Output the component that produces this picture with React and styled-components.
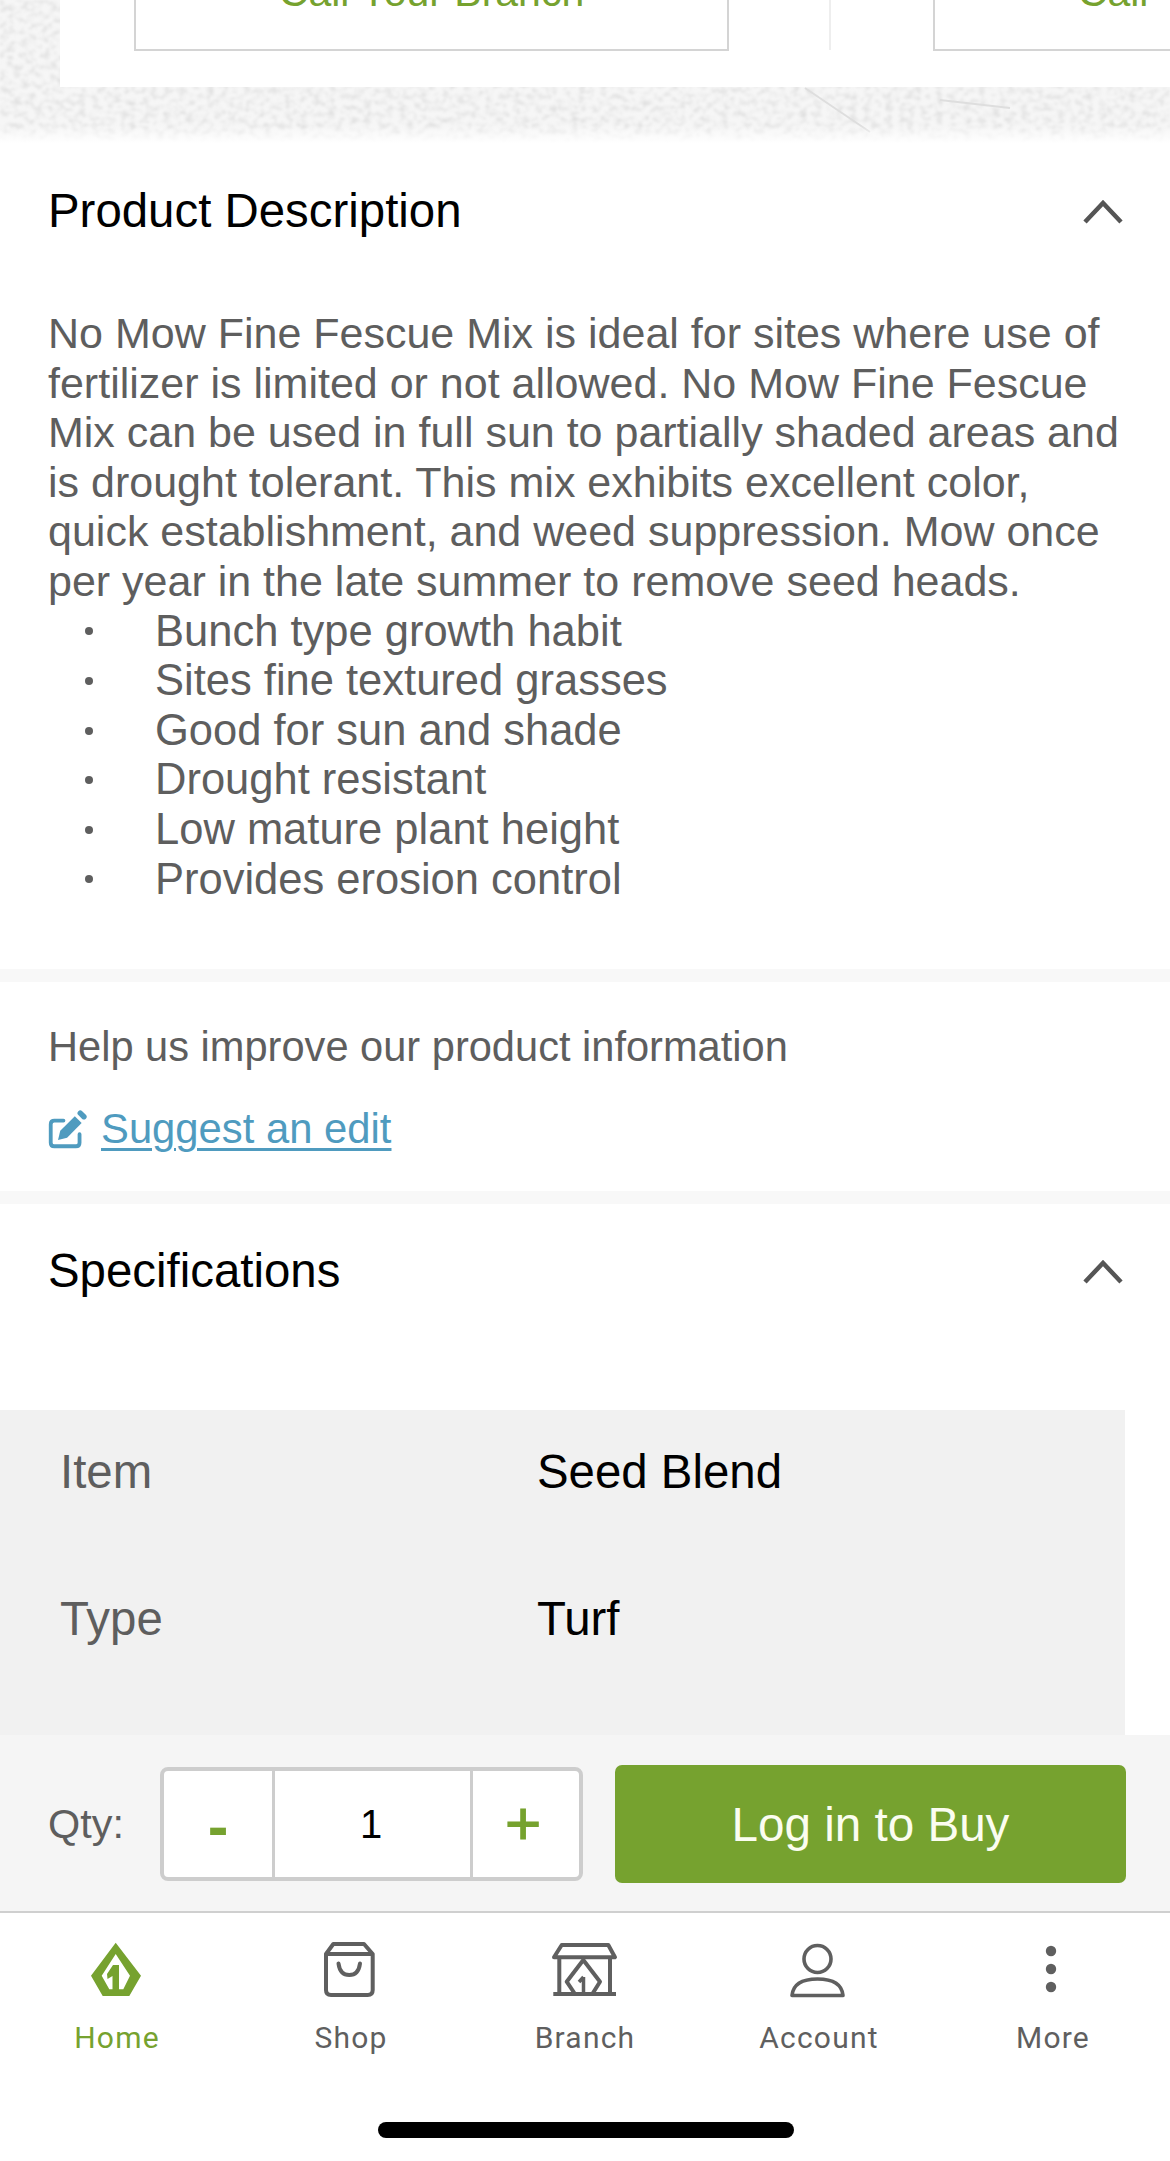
import React from 'react';
import styled, { createGlobalStyle } from 'styled-components';

const Global = createGlobalStyle`
  html, body { margin: 0; padding: 0; background: #fff; }
  * { box-sizing: border-box; }
`;

const Page = styled.div`
  width: 1170px;
  height: 2161px;
  display: flex;
  flex-direction: column;
  overflow: hidden;
  font-family: 'Liberation Sans', Arial, sans-serif;
`;

const Scroll = styled.div`
  flex: 1;
  min-height: 0;
  overflow: hidden;
`;

const Texture = styled.div`
  position: relative;
  height: 143px;
  background: #f6f6f6;
  overflow: hidden;
`;

const TextureArt = styled.svg`
  position: absolute;
  inset: 0;
`;

const BranchCard = styled.div`
  position: relative;
  margin-left: 60px;
  height: 87px;
  background: #fff;
  display: flex;
  align-items: flex-end;
  padding: 0 0 37px 74px;
`;

const CallBox = styled.div`
  flex: 0 0 595px;
  height: 60px;
  margin-bottom: -1px;
  border: 2px solid #d4d4d4;
  border-top: 0;
  display: flex;
  justify-content: center;
  align-items: flex-start;
  color: #76a22f;
  font-size: 41px;
  line-height: 41px;
`;

const CallText = styled.span`
  margin-top: -19px;
  white-space: nowrap;
`;

const CardRule = styled.div`
  flex: 0 0 2px;
  height: 60px;
  margin: 0 102px 0 100px;
  background: #eee;
`;

const Section = styled.section`
  background: #fff;
  padding: ${p => p.$pad};
`;

const Gap = styled.div`
  height: 13px;
  background: #f8f8f8;
`;

const SectionHead = styled.div`
  display: flex;
  justify-content: space-between;
  align-items: center;
  padding: ${p => p.$top}px 48px 0;
  color: #000;
  font-size: 47.4px;
  line-height: 56px;
`;

const Chevron = styled.svg`
  width: 42px;
  height: 26px;
  margin-right: -2px;
  fill: none;
  stroke: #555;
  stroke-width: 4.5;
`;

const Body = styled.div`
  padding: 70px 40px 0 48px;
  color: #5e5e5e;
  font-size: 43px;
  line-height: 49.6px;
`;

const Bullets = styled.ul`
  list-style: none;
  margin: 0;
  padding: 0;
  font-size: 43.5px;
`;

const Bullet = styled.li`
  display: flex;
  align-items: center;

  &::before {
    content: '';
    flex: 0 0 8px;
    width: 8px;
    height: 8px;
    margin: 0 62px 0 37px;
    border-radius: 50%;
    background: #5e5e5e;
  }
`;

const HelpText = styled.div`
  color: #5e5e5e;
  font-size: 41.6px;
  line-height: 50px;
`;

const EditRow = styled.div`
  display: flex;
  align-items: center;
  gap: 13px;
  margin-top: 32px;
  color: #4f9bbf;
  font-size: 41.8px;
  line-height: 50px;
`;

const EditLink = styled.a`
  color: inherit;
  text-decoration: underline;
  text-underline-offset: 5px;
  text-decoration-thickness: 3px;
`;

const SpecTable = styled.div`
  width: 1125px;
  margin-top: 111px;
  padding: 0 0 0 60px;
  background: #f1f1f1;
  height: 600px;
`;

const SpecRow = styled.div`
  display: grid;
  grid-template-columns: 477px 1fr;
  align-items: center;
  height: 122px;
  margin-bottom: 25px;
  font-size: 47.4px;
`;

const SpecLabel = styled.div`
  color: #5e5e5e;
`;

const SpecValue = styled.div`
  color: #000;
`;

const BuyBar = styled.div`
  flex: 0 0 178px;
  display: flex;
  align-items: center;
  padding: 2px 44px 0 48px;
  background: #f5f5f5;
  border-bottom: 2px solid #cfcfcf;
`;

const QtyLabel = styled.div`
  width: 112px;
  color: #5e5e5e;
  font-size: 41.4px;
`;

const Stepper = styled.div`
  display: grid;
  grid-template-columns: 108px 201px 1fr;
  width: 423px;
  height: 114px;
  margin-right: 32px;
  background: #fff;
  border: 4px solid #cdcdcd;
  border-radius: 8px;
`;

const StepCell = styled.div`
  display: flex;
  align-items: center;
  justify-content: center;
  padding-right: 3px;
  color: #000;
  font-size: 40px;
  border-left: 3px solid #cdcdcd;
  border-right: 3px solid #cdcdcd;
`;

const MinusCell = styled.div`
  display: flex;
  align-items: center;
  justify-content: center;
  color: #76a22f;
  font-size: 62px;
  font-weight: 700;
  padding-top: 3px;
`;

const PlusCell = styled.div`
  display: flex;
  align-items: center;
  justify-content: center;
  color: #76a22f;
  font-size: 62px;
  -webkit-text-stroke: 1.2px #76a22f;
  margin-left: -3px;
  padding: 0 3px 4px 0;
`;

const BuyButton = styled.button`
  flex: 1;
  height: 118px;
  border: 0;
  border-radius: 7px;
  background: #76a22f;
  color: #fbfdf0;
  font-family: inherit;
  font-size: 47.6px;
`;

const Nav = styled.nav`
  flex: 0 0 248px;
  position: relative;
  display: grid;
  grid-template-columns: repeat(5, 234px);
  align-content: start;
  padding-top: 28px;
  background: #fff;
`;

const NavItem = styled.div`
  display: flex;
  flex-direction: column;
  align-items: center;
  color: ${p => p.$active ? '#76a22f' : '#5f5f5f'};
  font-family: Roboto, 'Liberation Sans', sans-serif;
  font-size: 30px;
  font-weight: 400;
  letter-spacing: 1.2px;
`;

const NavIcon = styled.svg`
  width: 66px;
  height: 60px;
  margin-bottom: 19px;
`;

const HomeBar = styled.div`
  position: absolute;
  left: 378px;
  top: 209px;
  width: 416px;
  height: 16px;
  border-radius: 8px;
  background: #000;
`;

const HomeIcon = () => (
  <NavIcon viewBox="0 0 66 60" fill="#76a22f">
    <path
      fillRule="evenodd"
      d="M31.7 1.7 L57 34.7 L45.3 55 L18.7 55 L7 34.7 Z M31.7 13 L17.7 34.7 L25.3 48.3 L39.3 48.3 L46 34.7 Z"
    />
    <path d="M29 24 L35 24 L35 52 L28.5 52 L28.5 35 L23.5 38 L23 33 Z" />
  </NavIcon>
);

const ShopIcon = () => (
  <NavIcon viewBox="0 0 66 60" fill="none" stroke="#5f5f5f" strokeWidth="4">
    <path d="M15.3 3 L46 3 L54.7 13 L54.7 49 Q54.7 54 49.7 54 L13 54 Q8 54 8 49 L8 13 Z" strokeLinejoin="round" />
    <path d="M8 13 L54.7 13" />
    <path d="M20.5 22.5 Q22 34 31.3 34 Q40.5 34 42 22.5" strokeLinecap="round" />
  </NavIcon>
);

const BranchIcon = () => (
  <NavIcon viewBox="0 0 66 60" fill="none" stroke="#5f5f5f" strokeWidth="4">
    <path d="M9.7 4 L56.3 4 L63 16.3 L2 16.3 Z" strokeLinejoin="round" />
    <path d="M7.3 16.3 L7.3 53 M58 16.3 L58 53 M1.3 53 L64 53" />
    <path d="M31.3 19 L48 40.7 L40.3 53 L23 53 L14.7 40.7 Z" strokeLinejoin="round" />
    <path d="M31.5 36 L31.5 52 M31.5 36 L27 41" strokeWidth="3.5" />
  </NavIcon>
);

const AccountIcon = () => (
  <NavIcon viewBox="0 0 66 60" fill="none" stroke="#5f5f5f" strokeWidth="3.6">
    <circle cx="31.5" cy="18" r="13.5" />
    <path d="M6 54.5 Q7.5 38 31.5 38 Q55.5 38 57 54.5 Z" strokeLinejoin="round" />
  </NavIcon>
);

const MoreIcon = () => (
  <NavIcon viewBox="0 0 66 60" fill="#5f5f5f">
    <circle cx="31" cy="10" r="5.2" />
    <circle cx="31" cy="28" r="5.2" />
    <circle cx="31" cy="46" r="5.2" />
  </NavIcon>
);

const EditIcon = () => (
  <svg width="40" height="40" viewBox="0 0 44 42" fill="#4f9bbf">
    <path d="M17 11.7 L7 11.7 Q3 11.7 3 15.7 L3 36 Q3 40 7 40 L30.7 40 Q34.7 40 34.7 36 L34.7 26.7" fill="none" stroke="#4f9bbf" strokeWidth="4.2" strokeLinecap="round" />
    <path d="M11 33 L13.5 23 L29.5 7 L37 14.5 L21 30.5 Z" />
    <path d="M35.5 3.5 L39.5 7.5" stroke="#4f9bbf" strokeWidth="6" strokeLinecap="round" />
  </svg>
);

const UpChevron = () => (
  <Chevron viewBox="0 0 42 26">
    <path d="M3 24 L21 5 L39 24" />
  </Chevron>
);

const bullets = [
  'Bunch type growth habit',
  'Sites fine textured grasses',
  'Good for sun and shade',
  'Drought resistant',
  'Low mature plant height',
  'Provides erosion control',
];

const tabs = [
  ['Home', HomeIcon],
  ['Shop', ShopIcon],
  ['Branch', BranchIcon],
  ['Account', AccountIcon],
  ['More', MoreIcon],
];

export default function App() {
  return (
    <Page>
      <Global />
      <Scroll>
        <Texture>
          <TextureArt width="1170" height="143">
            <defs>
              <filter id="paper" x="0" y="0" width="100%" height="100%">
                <feTurbulence type="fractalNoise" baseFrequency="0.14 0.17" numOctaves="4" seed="11" />
                <feColorMatrix values="0 0 0 0 0.62  0 0 0 0 0.62  0 0 0 0 0.62  1.3 0 0 0 -0.55" />
                <feGaussianBlur stdDeviation="0.8" />
              </filter>
              <linearGradient id="fade" x1="0" y1="0" x2="0" y2="1">
                <stop offset="0" stopColor="#fff" stopOpacity="0" />
                <stop offset="1" stopColor="#fff" />
              </linearGradient>
            </defs>
            <rect width="1170" height="143" filter="url(#paper)" />
            <path d="M805 88 L870 132 M940 100 L1010 108" stroke="#dedede" strokeWidth="2" fill="none" />
            <rect y="125" width="1170" height="18" fill="url(#fade)" />
          </TextureArt>
          <BranchCard>
            <CallBox><CallText>Call Your Branch</CallText></CallBox>
            <CardRule />
            <CallBox><CallText>Call Your Branch</CallText></CallBox>
          </BranchCard>
        </Texture>
        <Section $pad="0 0 65px">
          <SectionHead $top={40}>
            <span>Product Description</span>
            <UpChevron />
          </SectionHead>
          <Body>
            No Mow Fine Fescue Mix is ideal for sites where use of fertilizer is limited or not allowed. No Mow Fine Fescue Mix can be used in full sun to partially shaded areas and is drought tolerant. This mix exhibits excellent color, quick establishment, and weed suppression. Mow once per year in the late summer to remove seed heads.
            <Bullets>
              {bullets.map(b => <Bullet key={b}>{b}</Bullet>)}
            </Bullets>
          </Body>
        </Section>
        <Gap />
        <Section $pad="40px 48px 37px">
          <HelpText>Help us improve our product information</HelpText>
          <EditRow>
            <EditIcon />
            <EditLink>Suggest an edit</EditLink>
          </EditRow>
        </Section>
        <Gap />
        <Section $pad="0">
          <SectionHead $top={39}>
            <span>Specifications</span>
            <UpChevron />
          </SectionHead>
          <SpecTable>
            <SpecRow>
              <SpecLabel>Item</SpecLabel>
              <SpecValue>Seed Blend</SpecValue>
            </SpecRow>
            <SpecRow>
              <SpecLabel>Type</SpecLabel>
              <SpecValue>Turf</SpecValue>
            </SpecRow>
          </SpecTable>
        </Section>
      </Scroll>
      <BuyBar>
        <QtyLabel>Qty:</QtyLabel>
        <Stepper>
          <MinusCell>-</MinusCell>
          <StepCell>1</StepCell>
          <PlusCell>+</PlusCell>
        </Stepper>
        <BuyButton>Log in to Buy</BuyButton>
      </BuyBar>
      <Nav>
        {tabs.map(([label, Icon], i) => (
          <NavItem key={label} $active={i === 0}>
            <Icon />
            {label}
          </NavItem>
        ))}
        <HomeBar />
      </Nav>
    </Page>
  );
}
